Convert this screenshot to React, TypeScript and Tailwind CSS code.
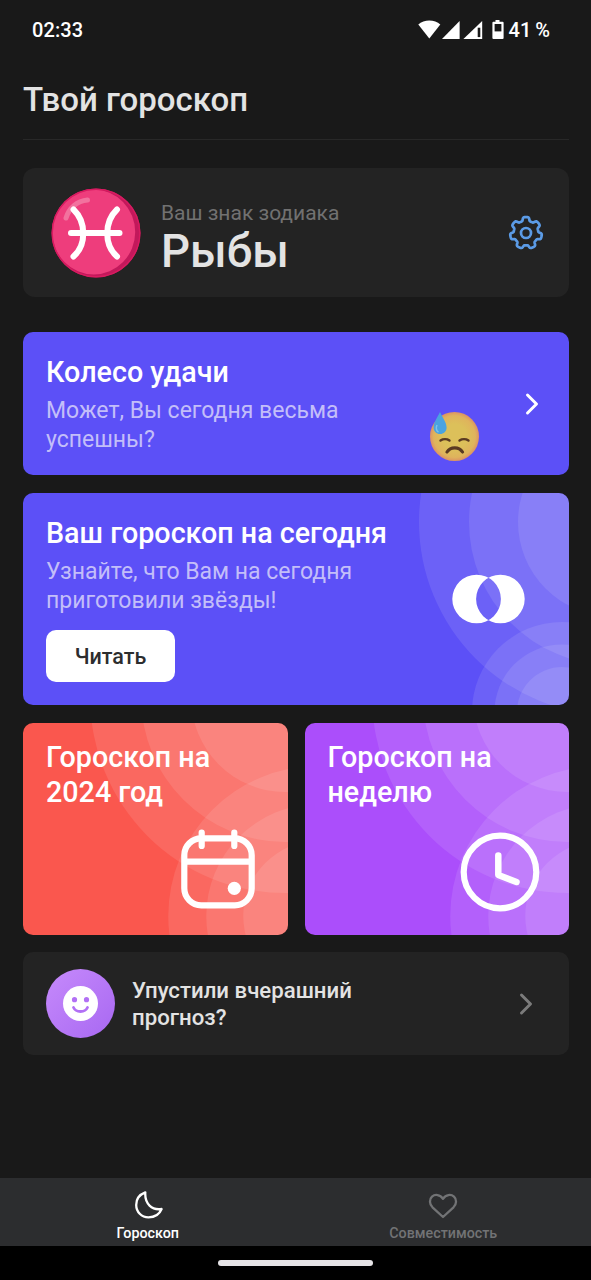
import type { ReactNode } from "react";

// Seven-lobed gear outline, centred in a 36x36 box
const gearPath = (() => {
  const points: string[] = [];
  for (let i = 0; i < 210; i++) {
    const t = (i / 210) * Math.PI * 2;
    const wave = Math.sin((Math.cos(7 * t) * Math.PI) / 2);
    const r = 14.1 + 1.8 * wave;
    // steeper flanks, so the lobes read as round knobs
    const a = t + 0.03 * Math.sin(14 * t) + 0.01 * Math.sin(7 * t);
    const x = 18 + r * Math.sin(a);
    const y = 18 - r * Math.cos(a);
    points.push(`${x.toFixed(2)} ${y.toFixed(2)}`);
  }
  return `M${points.join("L")}Z`;
})();

function StatusBar() {
  return (
    <div className="flex h-[59px] items-center justify-between pr-[41px] pl-[32px] text-xl font-medium text-white">
      <span className="tracking-[0.1px]">02:33</span>
      <div className="flex items-center">
        <svg width="86" height="20" viewBox="0 0 86 20" fill="#fff">
          <path d="M0.3 4.6C6 -0.9 16.7 -0.9 22.3 4.6L11.3 18.4Z" />
          <path d="M41.6 1v18H24Z" />
          <path d="M64.2 1v18H45.4Z" />
          <path d="M59.7 7.7h2.6v9.4h-2.6z" fill="#191919" />
          <path d="M77.5 0h4v1.7h3.1q1 0 1 1v15.3q0 1-1 1h-9.2q-1 0-1-1V2.7q0-1 1-1h2.1z" />
          <path d="M76.6 4h6.8v7.4h-6.8z" fill="#191919" />
        </svg>
        <span className="ml-[5px]">
          41<span className="ml-[4px]">%</span>
        </span>
      </div>
    </div>
  );
}

function Chevron({ className }: { className: string }) {
  return (
    <svg
      width="16"
      height="26"
      viewBox="0 0 16 26"
      fill="none"
      stroke="currentColor"
      strokeWidth="3"
      strokeLinecap="round"
      strokeLinejoin="round"
      className={className}
    >
      <path d="M3.5 4L12.5 13L3.5 22" />
    </svg>
  );
}

function PiscesIcon() {
  return (
    <svg width="90" height="90" viewBox="0 0 90 90" fill="none">
      <circle cx="45" cy="45" r="44.5" fill="#c2185b" />
      <ellipse cx="42.7" cy="44" rx="41.5" ry="42.5" fill="#ee3d7c" />
      <circle cx="45" cy="45" r="43.8" stroke="#d81b60" strokeWidth="1.4" />
      <path
        d="M15 30C18 20 26 13 36.5 12"
        stroke="#f48fb1"
        strokeWidth="5"
        strokeLinecap="round"
        opacity="0.65"
      />
      <g stroke="#fff" strokeWidth="6" strokeLinecap="round">
        <path d="M22.5 21.5C35.5 34 35.5 57 22.5 68.5" />
        <path d="M66 21.5C53 34 53 57 66 68.5" />
        <path d="M20 45H68.5" />
      </g>
    </svg>
  );
}

function SweatFace() {
  return (
    <svg width="52" height="52" viewBox="0 0 52 52" fill="none">
      <defs>
        <radialGradient id="face" cx="0.5" cy="0.5" r="0.5">
          <stop offset="0.5" stopColor="#dcc05a" />
          <stop offset="0.85" stopColor="#dfb35c" />
          <stop offset="1" stopColor="#dc9264" />
        </radialGradient>
      </defs>
      <circle cx="26.5" cy="26.5" r="24.5" fill="url(#face)" />
      <path
        d="M12 2C9 8 5.6 12.5 5.6 17.5C5.6 21.5 8.5 24 12 24C15.7 24 18.6 21.5 18.6 17.5C18.6 12.5 14.8 8 12 2Z"
        fill="#4aa3e0"
      />
      <path d="M9 15C7.5 18 8.5 21 10.5 22" stroke="#7cc3ee" strokeWidth="1.5" />
      <g stroke="#5a3a22" strokeLinecap="round">
        <path d="M12.5 30.5C15 28.8 19 28.8 21.5 30.5" strokeWidth="2.4" />
        <path d="M31.5 30.5C34 28.8 38 28.8 40.5 30.5" strokeWidth="2.4" />
        <path d="M19 42C22.5 36.5 31 36.5 34.5 42" strokeWidth="3.2" />
      </g>
    </svg>
  );
}

function Rings({ small = false }: { small?: boolean }) {
  if (small) {
    return (
      <svg
        viewBox="0 0 264 212"
        className="absolute inset-0 h-full w-full"
        fill="#fff"
        fillOpacity="0.1"
      >
        <circle cx="262" cy="-25" r="195" />
        <circle cx="262" cy="-25" r="144" />
        <circle cx="262" cy="-25" r="94" />
        <circle cx="295" cy="193" r="150" />
        <circle cx="295" cy="193" r="112" />
        <circle cx="295" cy="193" r="75" />
      </svg>
    );
  }
  return (
    <svg
      viewBox="0 0 546 212"
      className="absolute inset-0 h-full w-full"
      fill="#fff"
      fillOpacity="0.1"
    >
      <circle cx="589" cy="29" r="193" />
      <circle cx="589" cy="29" r="143" />
      <circle cx="589" cy="29" r="94" />
      <circle cx="539" cy="219" r="90" />
      <circle cx="539" cy="219" r="67.5" />
      <circle cx="539" cy="219" r="45" />
    </svg>
  );
}

function SmallCard({
  title,
  className,
  children,
}: {
  title: ReactNode;
  className: string;
  children: ReactNode;
}) {
  return (
    <div
      className={`relative flex flex-1 flex-col justify-between overflow-hidden rounded-[10px] ${className}`}
    >
      <Rings small />
      <h2 className="relative px-[23px] pt-[17px] text-[28.7px] leading-[34.5px] font-medium text-white">
        {title}
      </h2>
      <div className="relative flex justify-end">{children}</div>
    </div>
  );
}

export default function App() {
  return (
    <div className="flex h-[1280px] w-[591px] flex-col overflow-hidden bg-[#191919] font-['Roboto',sans-serif]">
      <StatusBar />

      <main className="flex flex-1 flex-col pr-[22px] pl-[23px]">
        <h1 className="h-[81px] border-b border-[#282828] pt-[21px] text-[33px] leading-[40px] font-medium text-[#e3e3e3]">
          Твой гороскоп
        </h1>

        {/* Zodiac sign */}
        <section className="mt-[28px] flex h-[129px] items-center rounded-[12px] bg-[#232323] pr-[25px] pl-[28px]">
          <PiscesIcon />
          <div className="ml-5 flex-1 pt-[14px]">
            <p className="text-[21px] leading-6 text-[#717171]">
              Ваш знак зодиака
            </p>
            <p className="text-[45.5px] leading-[54px] font-medium text-[#e3e3e3]">
              Рыбы
            </p>
          </div>
          <svg width="36" height="36" viewBox="0 0 36 36" fill="none" stroke="#5b9be6" strokeWidth="2.7">
            <path d={gearPath} strokeLinejoin="round" />
            <circle cx="18" cy="18" r="5" />
          </svg>
        </section>

        {/* Wheel of fortune */}
        <section className="mt-[35px] flex h-[143px] rounded-[10px] bg-[#5c50f7] pr-[29px] pl-[23px]">
          <div className="w-[330px] pt-[23px]">
            <h2 className="text-[28.7px] leading-[35px] font-medium text-white">
              Колесо удачи
            </h2>
            <p className="mt-[6px] text-[23px] leading-[29px] text-[#c3bef9]">
              Может, Вы сегодня весьма успешны?
            </p>
          </div>
          <div className="ml-auto self-end pb-[13px]">
            <SweatFace />
          </div>
          <Chevron className="ml-[44px] self-center text-white" />
        </section>

        {/* Today */}
        <section className="relative mt-[18px] flex h-[212px] items-center justify-between overflow-hidden rounded-[10px] bg-[#5c50f7] pr-[44px] pl-[23px]">
          <Rings />
          <div className="relative self-start pt-[23px]">
            <h2 className="text-[28.7px] leading-[35px] font-medium text-white">
              Ваш гороскоп на сегодня
            </h2>
            <p className="mt-[6px] text-[23px] leading-[29px] text-[#c3bef9]">
              Узнайте, что Вам на сегодня
              <br />
              приготовили звёзды!
            </p>
            <button className="mt-[15px] h-[52px] w-[129px] rounded-[10px] bg-white pt-[2px] text-[21.5px] font-medium text-[#2c2d2e]">
              Читать
            </button>
          </div>
          <svg width="73" height="50" viewBox="0 0 73 50" className="relative">
            <path
              fill="#fff"
              fillRule="evenodd"
              d="M.3 25a24.3 24.3 0 1 1 48.6 0a24.3 24.3 0 1 1-48.6 0ZM24.1 25a24.3 24.3 0 1 1 48.6 0a24.3 24.3 0 1 1-48.6 0Z"
            />
          </svg>
        </section>

        <section className="mt-[18px] flex h-[212px] gap-[17px]">
          <SmallCard
            className="bg-[#fa574e]"
            title={
              <>
                Гороскоп на
                <br />
                2024 год
              </>
            }
          >
            <svg
              width="74"
              height="80"
              viewBox="0 0 74 80"
              fill="none"
              stroke="#fff"
              strokeWidth="6.2"
              strokeLinecap="round"
              className="mr-[32.5px] mb-[26px]"
            >
              <rect x="3.3" y="9.3" width="67.4" height="67" rx="17" />
              <path d="M4 32.7H70M20.7 3.5V17M53.3 3.5V17" />
              <circle cx="53.3" cy="59.3" r="6.6" fill="#fff" stroke="none" />
            </svg>
          </SmallCard>
          <SmallCard
            className="bg-[#ab4efb]"
            title={
              <>
                Гороскоп на
                <br />
                неделю
              </>
            }
          >
            <svg
              width="80"
              height="80"
              viewBox="0 0 80 80"
              fill="none"
              stroke="#fff"
              strokeLinecap="round"
              strokeLinejoin="round"
              className="mr-[29px] mb-[23px]"
            >
              <circle cx="40" cy="40" r="36.3" strokeWidth="6.2" />
              <path d="M38.3 23.5V43L56.5 50" strokeWidth="6.5" />
            </svg>
          </SmallCard>
        </section>

        {/* Yesterday */}
        <section className="mt-[17px] flex h-[103px] items-center rounded-[10px] bg-[#232323] pr-[35px] pl-[23px]">
          <svg width="69" height="69" viewBox="0 0 69 69" fill="none">
            <defs>
              <linearGradient id="smile" x1="0" y1="0" x2="1" y2="1">
                <stop stopColor="#c68afb" />
                <stop offset="1" stopColor="#a868f2" />
              </linearGradient>
            </defs>
            <circle cx="34.5" cy="34.5" r="34.5" fill="url(#smile)" />
            <circle cx="34.5" cy="34.5" r="17.5" fill="#fff" />
            <circle cx="28.5" cy="30.7" r="2.6" fill="#b270f5" />
            <circle cx="40.5" cy="30.7" r="2.6" fill="#b270f5" />
            <path
              d="M27.5 38.5C30 43.8 39 43.8 41.5 38.5"
              stroke="#b270f5"
              strokeWidth="2.8"
              strokeLinecap="round"
            />
          </svg>
          <p className="ml-[17px] w-[260px] text-[22.2px] leading-[27px] font-medium text-[#e3e3e3]">
            Упустили вчерашний прогноз?
          </p>
          <Chevron className="ml-auto text-[#7b7b7b]" />
        </section>
      </main>

      <nav className="flex h-[68px] bg-[#2c2d2f] text-[14.3px] leading-[18px] font-medium">
        <div className="flex flex-1 flex-col items-center pt-[12px] text-white">
          <svg width="30" height="30" viewBox="0 0 30 30" fill="none" stroke="currentColor" strokeWidth="2.3" strokeLinejoin="round">
            <path d="M12.3 2.3C6.5 4.5 3.2 9.3 3.2 14.9C3.2 21.8 8.5 27.3 15.5 27.3C21.5 27.3 26.5 24.2 28.6 19C19 20.5 11.5 14 12.3 2.3Z" />
          </svg>
          <span className="mt-[4px]">Гороскоп</span>
        </div>
        <div className="flex flex-1 flex-col items-center pt-[12px] text-[#727375]">
          <svg width="30" height="30" viewBox="0 0 30 30" fill="none" stroke="currentColor" strokeWidth="2.3" strokeLinejoin="round">
            <path d="M15 27L4.5 17.3C1.2 14 1.2 9.2 4 6.6C7 4 12 4.3 15 8.8C18 4.3 23 4 26 6.6C28.8 9.2 28.8 14 25.5 17.3Z" />
          </svg>
          <span className="mt-[4px]">Совместимость</span>
        </div>
      </nav>
      <div className="flex h-[34px] justify-center bg-black pt-[14px]">
        <div className="h-[6px] w-[155px] rounded-full bg-[#e6e4e7]" />
      </div>
    </div>
  );
}
